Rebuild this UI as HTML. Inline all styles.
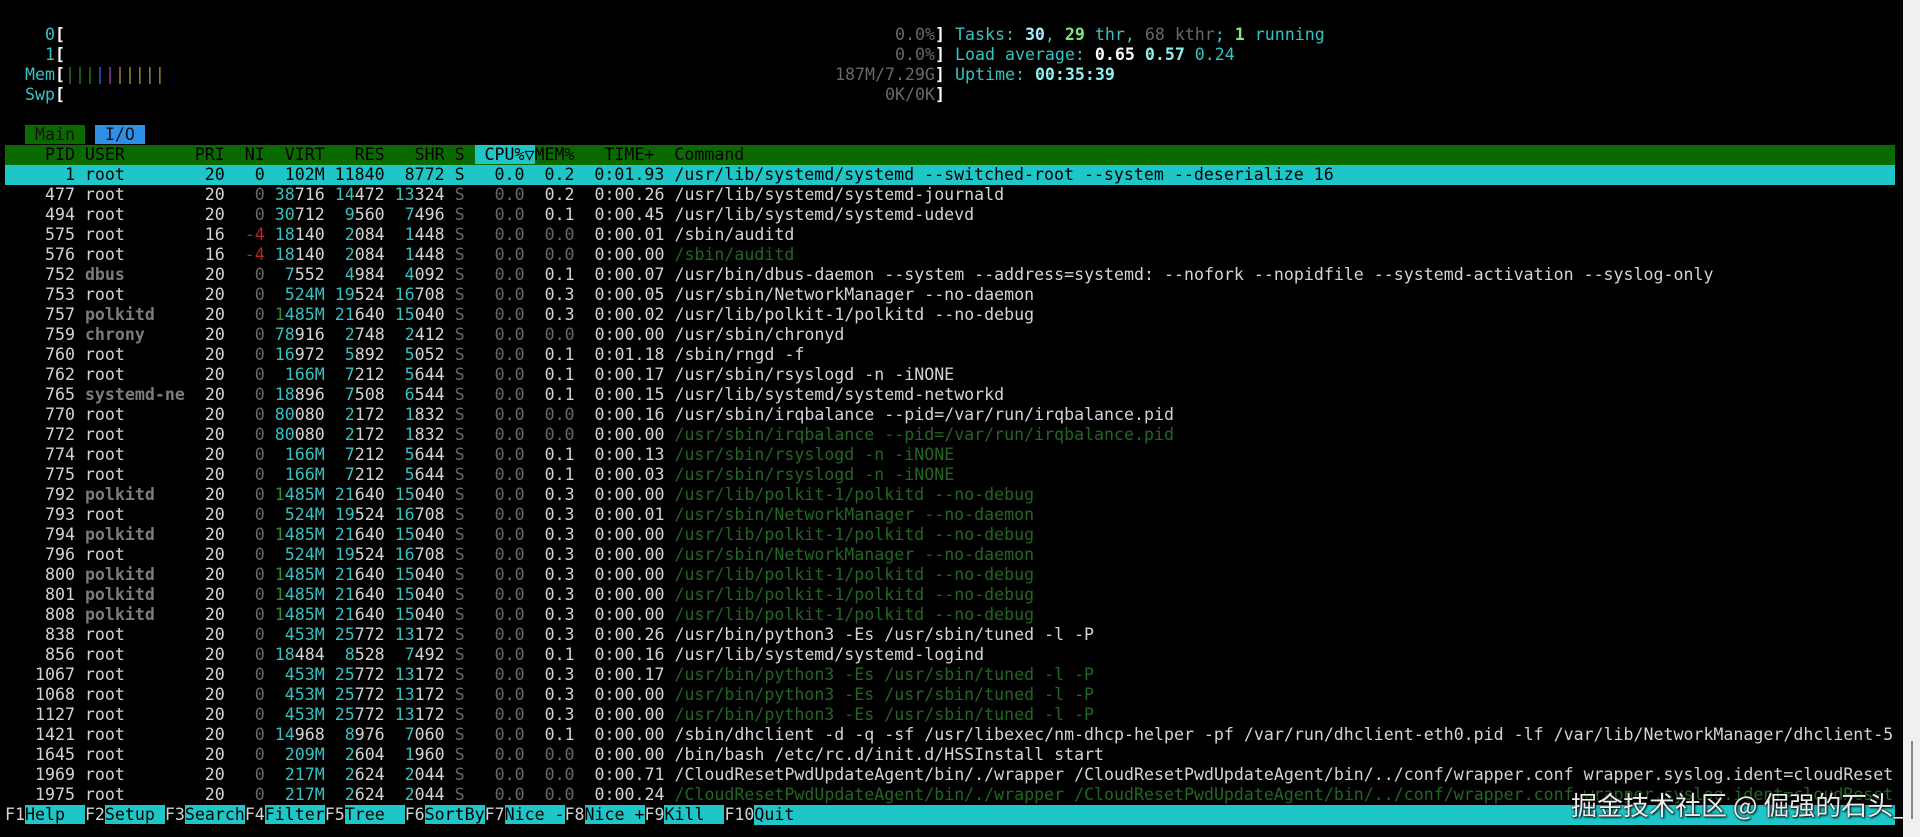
<!DOCTYPE html>
<html><head><meta charset="utf-8">
<style>
html,body{margin:0;padding:0;background:#000;width:1920px;height:837px;overflow:hidden}
#t{position:absolute;left:5px;top:25px;width:1890px;font-family:"DejaVu Sans Mono","Liberation Mono",monospace;font-size:16.6px;color:#d4d4d4}
.l{position:relative;height:20px;line-height:20px;white-space:pre;overflow:hidden;width:1890px}
.c{color:#35c2c2}.g{color:#686868}.t{color:#236623}.r{color:#b02828}.u{color:#7c7c7c;font-weight:bold}.G{color:#2f8f2f}
.W{color:#fff;font-weight:bold}
.sel{background:#1ec6c8;color:#000}
.hdr{background:#0a6a00;color:#000}
.hc{background:#1ec6c8}
.k{background:#1ec6c8;color:#000}
.a{position:absolute;top:0}
</style></head><body>
<div id="t">
<div class="l">    <span class="c">0</span><span class="W">[</span><span class="a" style="left:890px"><span class="g">0.0%</span><span class="W">]</span></span><span class="a c" style="left:950px">Tasks: <span style="color:#a8ecff;font-weight:bold">30</span>, <span style="color:#7ee87e;font-weight:bold">29</span> thr, <span class="g">68 kthr</span>; <span style="color:#7ee87e;font-weight:bold">1</span> running</span></div>
<div class="l">    <span class="c">1</span><span class="W">[</span><span class="a" style="left:890px"><span class="g">0.0%</span><span class="W">]</span></span><span class="a c" style="left:950px">Load average: <span class="W">0.65</span> <span style="color:#8ff0f0;font-weight:bold">0.57</span> 0.24</span></div>
<div class="l">  <span class="c">Mem</span><span class="W">[</span><span style="color:#2a7a2a">|||</span><span style="color:#3a5ad8">|</span><span style="color:#9a3aa8">|</span><span style="color:#a08a30">|||||</span><span class="a" style="left:830px"><span class="g">187M/7.29G</span><span class="W">]</span></span><span class="a c" style="left:950px">Uptime: <span style="color:#8ff0f0;font-weight:bold">00:35:39</span></span></div>
<div class="l">  <span class="c">Swp</span><span class="W">[</span><span class="a" style="left:880px"><span class="g">0K/0K</span><span class="W">]</span></span></div>
<div class="l"> </div>
<div class="l">  <span style="background:#0a6a00;color:#111"> Main </span> <span style="background:#2e8fe8;color:#111"> I/O </span></div>
<div class="l hdr">    PID USER       PRI  NI  VIRT   RES   SHR S <span class="hc"> CPU%▽</span>MEM%   TIME+  Command</div>
<div class="l sel">      1 root        20   0  102M 11840  8772 S   0.0  0.2  0:01.93 /usr/lib/systemd/systemd --switched-root --system --deserialize 16</div>
<div class="l">    477 root        20   <span class="g">0</span> <span class="c">38</span>716 <span class="c">14</span>472 <span class="c">13</span>324 <span class="g">S</span>   <span class="g">0.0</span>  0.2  0:00.26 /usr/lib/systemd/systemd-journald</div>
<div class="l">    494 root        20   <span class="g">0</span> <span class="c">30</span>712  <span class="c">9</span>560  <span class="c">7</span>496 <span class="g">S</span>   <span class="g">0.0</span>  0.1  0:00.45 /usr/lib/systemd/systemd-udevd</div>
<div class="l">    575 root        16  <span class="r">-4</span> <span class="c">18</span>140  <span class="c">2</span>084  <span class="c">1</span>448 <span class="g">S</span>   <span class="g">0.0</span>  <span class="g">0.0</span>  0:00.01 /sbin/auditd</div>
<div class="l">    576 root        16  <span class="r">-4</span> <span class="c">18</span>140  <span class="c">2</span>084  <span class="c">1</span>448 <span class="g">S</span>   <span class="g">0.0</span>  <span class="g">0.0</span>  0:00.00 <span class="t">/sbin/auditd</span></div>
<div class="l">    752 <span class="u">dbus</span>        20   <span class="g">0</span>  <span class="c">7</span>552  <span class="c">4</span>984  <span class="c">4</span>092 <span class="g">S</span>   <span class="g">0.0</span>  0.1  0:00.07 /usr/bin/dbus-daemon --system --address=systemd: --nofork --nopidfile --systemd-activation --syslog-only</div>
<div class="l">    753 root        20   <span class="g">0</span>  <span class="c">524M</span> <span class="c">19</span>524 <span class="c">16</span>708 <span class="g">S</span>   <span class="g">0.0</span>  0.3  0:00.05 /usr/sbin/NetworkManager --no-daemon</div>
<div class="l">    757 <span class="u">polkitd</span>     20   <span class="g">0</span> <span class="G">1</span><span class="c">485M</span> <span class="c">21</span>640 <span class="c">15</span>040 <span class="g">S</span>   <span class="g">0.0</span>  0.3  0:00.02 /usr/lib/polkit-1/polkitd --no-debug</div>
<div class="l">    759 <span class="u">chrony</span>      20   <span class="g">0</span> <span class="c">78</span>916  <span class="c">2</span>748  <span class="c">2</span>412 <span class="g">S</span>   <span class="g">0.0</span>  <span class="g">0.0</span>  0:00.00 /usr/sbin/chronyd</div>
<div class="l">    760 root        20   <span class="g">0</span> <span class="c">16</span>972  <span class="c">5</span>892  <span class="c">5</span>052 <span class="g">S</span>   <span class="g">0.0</span>  0.1  0:01.18 /sbin/rngd -f</div>
<div class="l">    762 root        20   <span class="g">0</span>  <span class="c">166M</span>  <span class="c">7</span>212  <span class="c">5</span>644 <span class="g">S</span>   <span class="g">0.0</span>  0.1  0:00.17 /usr/sbin/rsyslogd -n -iNONE</div>
<div class="l">    765 <span class="u">systemd-ne</span>  20   <span class="g">0</span> <span class="c">18</span>896  <span class="c">7</span>508  <span class="c">6</span>544 <span class="g">S</span>   <span class="g">0.0</span>  0.1  0:00.15 /usr/lib/systemd/systemd-networkd</div>
<div class="l">    770 root        20   <span class="g">0</span> <span class="c">80</span>080  <span class="c">2</span>172  <span class="c">1</span>832 <span class="g">S</span>   <span class="g">0.0</span>  <span class="g">0.0</span>  0:00.16 /usr/sbin/irqbalance --pid=/var/run/irqbalance.pid</div>
<div class="l">    772 root        20   <span class="g">0</span> <span class="c">80</span>080  <span class="c">2</span>172  <span class="c">1</span>832 <span class="g">S</span>   <span class="g">0.0</span>  <span class="g">0.0</span>  0:00.00 <span class="t">/usr/sbin/irqbalance --pid=/var/run/irqbalance.pid</span></div>
<div class="l">    774 root        20   <span class="g">0</span>  <span class="c">166M</span>  <span class="c">7</span>212  <span class="c">5</span>644 <span class="g">S</span>   <span class="g">0.0</span>  0.1  0:00.13 <span class="t">/usr/sbin/rsyslogd -n -iNONE</span></div>
<div class="l">    775 root        20   <span class="g">0</span>  <span class="c">166M</span>  <span class="c">7</span>212  <span class="c">5</span>644 <span class="g">S</span>   <span class="g">0.0</span>  0.1  0:00.03 <span class="t">/usr/sbin/rsyslogd -n -iNONE</span></div>
<div class="l">    792 <span class="u">polkitd</span>     20   <span class="g">0</span> <span class="G">1</span><span class="c">485M</span> <span class="c">21</span>640 <span class="c">15</span>040 <span class="g">S</span>   <span class="g">0.0</span>  0.3  0:00.00 <span class="t">/usr/lib/polkit-1/polkitd --no-debug</span></div>
<div class="l">    793 root        20   <span class="g">0</span>  <span class="c">524M</span> <span class="c">19</span>524 <span class="c">16</span>708 <span class="g">S</span>   <span class="g">0.0</span>  0.3  0:00.01 <span class="t">/usr/sbin/NetworkManager --no-daemon</span></div>
<div class="l">    794 <span class="u">polkitd</span>     20   <span class="g">0</span> <span class="G">1</span><span class="c">485M</span> <span class="c">21</span>640 <span class="c">15</span>040 <span class="g">S</span>   <span class="g">0.0</span>  0.3  0:00.00 <span class="t">/usr/lib/polkit-1/polkitd --no-debug</span></div>
<div class="l">    796 root        20   <span class="g">0</span>  <span class="c">524M</span> <span class="c">19</span>524 <span class="c">16</span>708 <span class="g">S</span>   <span class="g">0.0</span>  0.3  0:00.00 <span class="t">/usr/sbin/NetworkManager --no-daemon</span></div>
<div class="l">    800 <span class="u">polkitd</span>     20   <span class="g">0</span> <span class="G">1</span><span class="c">485M</span> <span class="c">21</span>640 <span class="c">15</span>040 <span class="g">S</span>   <span class="g">0.0</span>  0.3  0:00.00 <span class="t">/usr/lib/polkit-1/polkitd --no-debug</span></div>
<div class="l">    801 <span class="u">polkitd</span>     20   <span class="g">0</span> <span class="G">1</span><span class="c">485M</span> <span class="c">21</span>640 <span class="c">15</span>040 <span class="g">S</span>   <span class="g">0.0</span>  0.3  0:00.00 <span class="t">/usr/lib/polkit-1/polkitd --no-debug</span></div>
<div class="l">    808 <span class="u">polkitd</span>     20   <span class="g">0</span> <span class="G">1</span><span class="c">485M</span> <span class="c">21</span>640 <span class="c">15</span>040 <span class="g">S</span>   <span class="g">0.0</span>  0.3  0:00.00 <span class="t">/usr/lib/polkit-1/polkitd --no-debug</span></div>
<div class="l">    838 root        20   <span class="g">0</span>  <span class="c">453M</span> <span class="c">25</span>772 <span class="c">13</span>172 <span class="g">S</span>   <span class="g">0.0</span>  0.3  0:00.26 /usr/bin/python3 -Es /usr/sbin/tuned -l -P</div>
<div class="l">    856 root        20   <span class="g">0</span> <span class="c">18</span>484  <span class="c">8</span>528  <span class="c">7</span>492 <span class="g">S</span>   <span class="g">0.0</span>  0.1  0:00.16 /usr/lib/systemd/systemd-logind</div>
<div class="l">   1067 root        20   <span class="g">0</span>  <span class="c">453M</span> <span class="c">25</span>772 <span class="c">13</span>172 <span class="g">S</span>   <span class="g">0.0</span>  0.3  0:00.17 <span class="t">/usr/bin/python3 -Es /usr/sbin/tuned -l -P</span></div>
<div class="l">   1068 root        20   <span class="g">0</span>  <span class="c">453M</span> <span class="c">25</span>772 <span class="c">13</span>172 <span class="g">S</span>   <span class="g">0.0</span>  0.3  0:00.00 <span class="t">/usr/bin/python3 -Es /usr/sbin/tuned -l -P</span></div>
<div class="l">   1127 root        20   <span class="g">0</span>  <span class="c">453M</span> <span class="c">25</span>772 <span class="c">13</span>172 <span class="g">S</span>   <span class="g">0.0</span>  0.3  0:00.00 <span class="t">/usr/bin/python3 -Es /usr/sbin/tuned -l -P</span></div>
<div class="l">   1421 root        20   <span class="g">0</span> <span class="c">14</span>968  <span class="c">8</span>976  <span class="c">7</span>060 <span class="g">S</span>   <span class="g">0.0</span>  0.1  0:00.00 /sbin/dhclient -d -q -sf /usr/libexec/nm-dhcp-helper -pf /var/run/dhclient-eth0.pid -lf /var/lib/NetworkManager/dhclient-5</div>
<div class="l">   1645 root        20   <span class="g">0</span>  <span class="c">209M</span>  <span class="c">2</span>604  <span class="c">1</span>960 <span class="g">S</span>   <span class="g">0.0</span>  <span class="g">0.0</span>  0:00.00 /bin/bash /etc/rc.d/init.d/HSSInstall start</div>
<div class="l">   1969 root        20   <span class="g">0</span>  <span class="c">217M</span>  <span class="c">2</span>624  <span class="c">2</span>044 <span class="g">S</span>   <span class="g">0.0</span>  <span class="g">0.0</span>  0:00.71 /CloudResetPwdUpdateAgent/bin/./wrapper /CloudResetPwdUpdateAgent/bin/../conf/wrapper.conf wrapper.syslog.ident=cloudReset</div>
<div class="l">   1975 root        20   <span class="g">0</span>  <span class="c">217M</span>  <span class="c">2</span>624  <span class="c">2</span>044 <span class="g">S</span>   <span class="g">0.0</span>  <span class="g">0.0</span>  0:00.24 <span class="t">/CloudResetPwdUpdateAgent/bin/./wrapper /CloudResetPwdUpdateAgent/bin/../conf/wrapper.conf wrapper.syslog.ident=cloudReset</span></div>
<div class="l">F1<span class="k">Help  </span>F2<span class="k">Setup </span>F3<span class="k">Search</span>F4<span class="k">Filter</span>F5<span class="k">Tree  </span>F6<span class="k">SortBy</span>F7<span class="k">Nice -</span>F8<span class="k">Nice +</span>F9<span class="k">Kill  </span>F10<span class="k" style="display:inline-block;width:1150px">Quit</span></div>
</div>
<div style="position:absolute;left:1571px;top:788px;font-family:'Noto Sans CJK SC','WenQuanYi Zen Hei',sans-serif;font-size:26px;line-height:34px;color:#ececec;text-shadow:0 0 2px #000,1px 1px 2px #000;white-space:nowrap">掘金技术社区 @ 倔强的石头_</div>
<div style="position:absolute;left:1903px;top:0;width:17px;height:837px;background:#f0f0f0"></div>
<div style="position:absolute;left:1911px;top:741px;width:2px;height:78px;background:#8a8a8a"></div>
</body></html>
